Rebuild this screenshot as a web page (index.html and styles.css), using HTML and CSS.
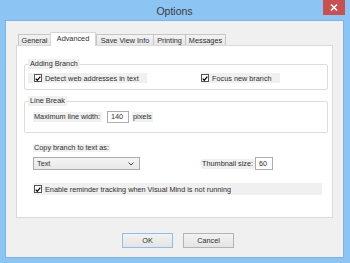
FILE: index.html
```html
<!doctype html>
<html lang="en">
  <head>
    <meta charset="UTF-8" />
    <meta name="viewport" content="width=device-width, initial-scale=1.0" />
    <title>Options</title>
    <link rel="stylesheet" href="styles.css">
  </head>
  <body>
    <div class="window">
      <div class="titlebar">
        <span class="title">Options</span>
        <span class="close">
          <svg width="8" height="7" viewBox="0 0 8 7"><path d="M1 0.5 L7 6.5 M7 0.5 L1 6.5" stroke="#fff" stroke-width="1.5" fill="none"/></svg>
        </span>
      </div>

      <div class="client">
        <div class="tabs">
          <div class="tab tab-general">General</div>
          <div class="tab tab-advanced active">Advanced</div>
          <div class="tab tab-save">Save View Info</div>
          <div class="tab tab-printing">Printing</div>
          <div class="tab tab-messages">Messages</div>
        </div>

        <div class="page">
          <fieldset class="group group-adding">
            <legend>Adding Branch</legend>
            <div class="row">
              <label class="check check-detect">
                <span class="box"><svg width="7" height="7" viewBox="0 0 7 7"><path d="M0.8 3.6 L2.7 5.6 L6.2 1.2" stroke="#000" stroke-width="1.5" fill="none"/></svg></span>
                Detect web addresses in text
              </label>
              <label class="check check-focus">
                <span class="box"><svg width="7" height="7" viewBox="0 0 7 7"><path d="M0.8 3.6 L2.7 5.6 L6.2 1.2" stroke="#000" stroke-width="1.5" fill="none"/></svg></span>
                Focus new branch
              </label>
            </div>
          </fieldset>

          <fieldset class="group group-line">
            <legend>Line Break</legend>
            <div class="row">
              <span class="caption caption-max">Maximum line width:</span>
              <span class="field field-width">140</span>
              <span class="caption caption-pixels">pixels</span>
            </div>
          </fieldset>

          <div class="caption copy-label">Copy branch to text as:</div>
          <div class="row copy-row">
            <div class="combo">
              <span>Text</span>
              <svg width="6" height="4" viewBox="0 0 6 4"><path d="M0.5 0.5 L3 3 L5.5 0.5" stroke="#444" stroke-width="1" fill="none"/></svg>
            </div>
            <span class="caption thumb-label">Thumbnail size:</span>
            <span class="field field-thumb">60</span>
          </div>

          <label class="check check-reminder">
            <span class="box"><svg width="7" height="7" viewBox="0 0 7 7"><path d="M0.8 3.6 L2.7 5.6 L6.2 1.2" stroke="#000" stroke-width="1.5" fill="none"/></svg></span>
            Enable reminder tracking when Visual Mind is not running
          </label>
        </div>

        <div class="buttons">
          <div class="btn btn-default">OK</div>
          <div class="btn">Cancel</div>
        </div>
      </div>
    </div>
  </body>
</html>
```

FILE: styles.css
```css
* {
  box-sizing: border-box;
}

body {
  margin: 0;
  font-family: "Liberation Sans", Arial, sans-serif;
  font-size: 7.3px;
  color: #2e2e2e;
}

.window {
  position: relative;
  width: 350px;
  height: 263px;
  padding: 0 6px 5px 5px;
  background: #8cc4f4;
}

/* Title bar */
.titlebar {
  display: flex;
  align-items: center;
  justify-content: center;
  height: 20px;
}

.title {
  font-size: 10.5px;
  color: #3c3c3c;
  padding-top: 1px;
}

.close {
  position: absolute;
  top: 0;
  right: 5px;
  width: 22px;
  height: 15px;
  display: flex;
  align-items: center;
  justify-content: center;
  background: #c75050;
}

/* Client area */
.client {
  height: 238px;
  padding: 11px 10px 0 10px;
  background: #f0f0f0;
  border: 1px solid #7fb3e2;
}

.tabs {
  display: flex;
  align-items: flex-end;
  height: 14px;
  padding-left: 2px;
  margin-bottom: -1px;
}

.tab {
  height: 11px;
  margin-bottom: 1px;
  padding-top: 1px;
  line-height: 9px;
  text-align: center;
  background: linear-gradient(#f3f3f3, #e6e6e6);
  border: 1px solid #c6c6c6;
  border-bottom: none;
  border-right: none;
}

.tab-messages {
  border-right: 1px solid #c6c6c6;
}

.tab.active {
  position: relative;
  z-index: 1;
  height: 14px;
  margin-bottom: 0;
  padding-top: 1px;
  background: #fff;
  border: 1px solid #d6d6d6;
  border-bottom: none;
}

.tab-general { width: 32px; }
.tab-advanced { width: 46px; }
.tab-save { width: 57px; }
.tab-printing { width: 32px; }
.tab-messages { width: 41px; }

.page {
  height: 173px;
  background: #fff;
  border: 1px solid #d9d9d9;
}

/* Groups */
.group {
  min-inline-size: 0;
  margin: 13px 4px 0 7px;
  padding: 4px 3px 6px 3px;
  border: 1px solid #dcdcdc;
  border-radius: 2px;
}

.group legend {
  padding: 0 2px;
  margin-left: 0;
  line-height: 10px;
  background: #f0f0f0;
}

.group-line {
  margin-top: 6px;
  padding-top: 5px;
  padding-bottom: 9px;
}

.row {
  display: flex;
  align-items: center;
}

.caption {
  background: #f0f0f0;
  line-height: 10px;
}

/* Checkboxes */
.check {
  display: flex;
  align-items: center;
  height: 10px;
  background: #f0f0f0;
}

.box {
  display: flex;
  align-items: center;
  justify-content: center;
  width: 8px;
  height: 8px;
  margin-right: 3px;
  background: #fff;
  border: 1px solid #555;
}

.check-detect {
  width: 119px;
  padding-left: 6px;
}

.check-focus {
  width: 79px;
  margin-left: 54px;
}

.check-reminder {
  width: 289px;
  height: 12px;
  margin: 13px 0 0 16px;
  padding-left: 1px;
}

/* Fields */
.field {
  height: 12px;
  padding-left: 3px;
  line-height: 10px;
  background: #fff;
  border: 1px solid #abadb3;
}

.caption-max {
  width: 69px;
  margin-left: 5px;
  padding-left: 1px;
}

.field-width {
  width: 22px;
  margin-left: 5px;
}

.caption-pixels {
  margin-left: 3px;
  padding: 0 1px;
}

.copy-label {
  display: inline-block;
  margin: 11px 0 0 16px;
  padding: 0 1px;
  line-height: 8px;
}

.copy-row {
  margin-top: 5px;
}

.combo {
  display: flex;
  align-items: center;
  justify-content: space-between;
  width: 107px;
  height: 13px;
  margin-left: 16px;
  padding: 0 5px 0 3px;
  background: linear-gradient(#f4f4f4, #e8e8e8);
  border: 1px solid #acacac;
}

.thumb-label {
  width: 54px;
  margin-left: 61px;
  padding-left: 1px;
}

.field-thumb {
  width: 18px;
  height: 13px;
  line-height: 11px;
}

/* Buttons */
.buttons {
  display: flex;
  gap: 10px;
  padding: 15px 0 0 106px;
}

.btn {
  width: 51px;
  height: 15px;
  line-height: 13px;
  text-align: center;
  background: linear-gradient(#f2f2f2, #e4e4e4);
  border: 1px solid #b4b4b4;
}

.btn-default {
  border-color: #8fbdec;
}
```
